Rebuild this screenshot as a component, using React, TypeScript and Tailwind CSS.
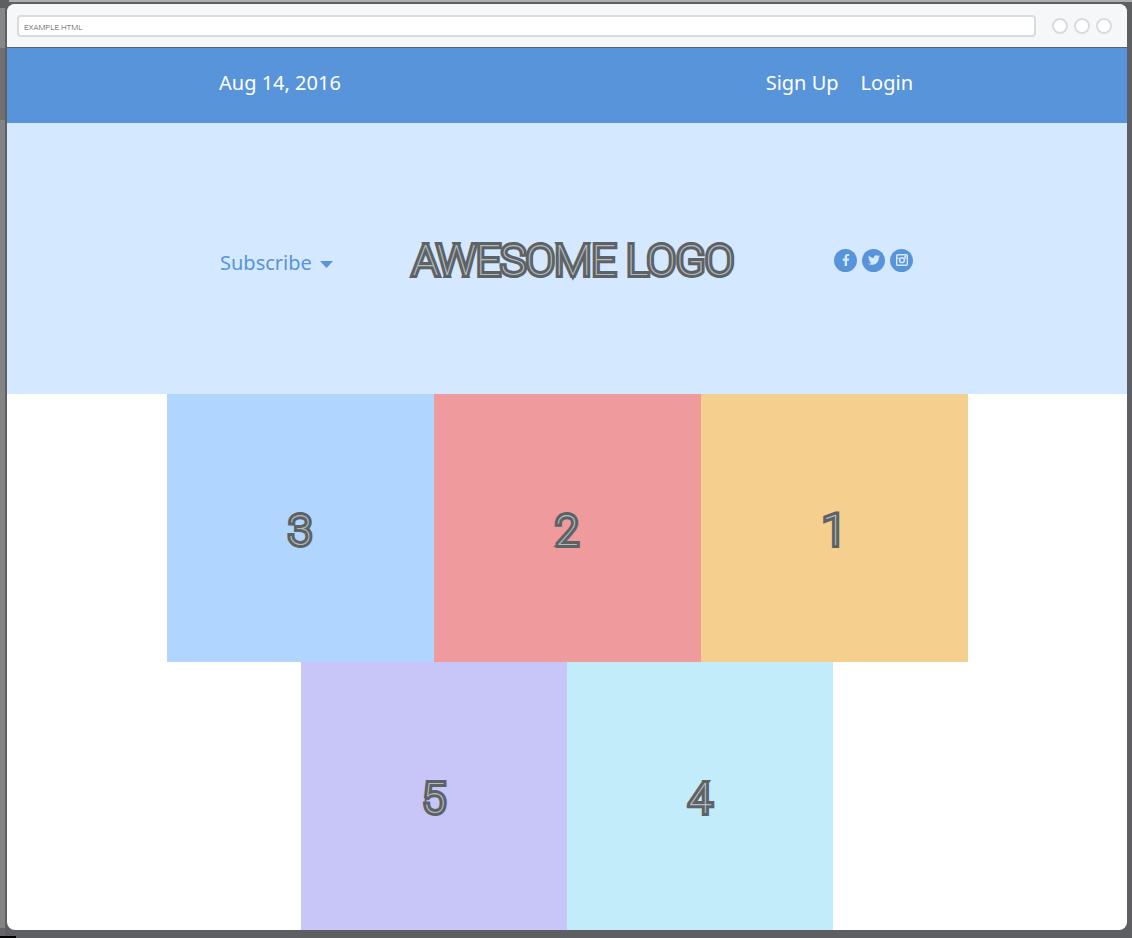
import { FaFacebookF, FaTwitter } from "react-icons/fa";

const outline =
  "font-['Roboto',sans-serif] font-thin text-[43px] leading-[54px] text-[#b4bbc0] [-webkit-text-stroke:6px_#5d6265] [paint-order:stroke_fill]";

const topTiles = [
  { label: "3", color: "bg-[#b0d6ff]" },
  { label: "2", color: "bg-[#ef9a9d]" },
  { label: "1", color: "bg-[#f4cf8d]" },
];

const bottomTiles = [
  { label: "5", color: "bg-[#c8c6f8]" },
  { label: "4", color: "bg-[#c3ecfa]" },
];

function Tile({ label, color }: { label: string; color: string }) {
  return (
    <div className={`flex h-[268px] flex-1 items-center justify-center pt-1 ${color}`}>
      <span className={outline}>{label}</span>
    </div>
  );
}

function InstagramGlyph() {
  return (
    <svg viewBox="0 0 12 12" className="size-3" aria-hidden="true">
      <rect x="0.7" y="0.7" width="10.6" height="10.6" rx="1" fill="none" stroke="currentColor" strokeWidth="1.4" />
      <path d="M1 4.2h2.4M8.6 4.2H11" stroke="currentColor" strokeWidth="1" />
      <circle cx="6" cy="6.2" r="2.4" fill="none" stroke="currentColor" strokeWidth="1.5" />
      <rect x="8.2" y="1.6" width="2" height="2" fill="currentColor" />
    </svg>
  );
}

const social = "flex size-[23px] items-center justify-center rounded-full bg-[#5894d9] text-[#d4e8ff]";

export default function App() {
  return (
    <div className="flex min-h-screen bg-[#5e5f63] font-['Noto_Sans',sans-serif]">
      <div className="flex w-[5px] shrink-0 flex-col" aria-hidden="true">
        <div className="h-2 bg-[#5e5f63]" />
        <div className="h-10 bg-[#868789]" />
        <div className="h-[72px] bg-[#717070]" />
        <div className="flex-1 bg-[#828385]" />
        <div className="h-2 bg-[#656668]" />
        <div className="h-0.5 w-4 bg-black" />
      </div>
      <div className="min-w-0 flex-1">
        <div className="ml-1 h-0.5 bg-[#adaeb0]" />
        <div className="mt-0.5 mr-[5px] mb-2 ml-0.5 overflow-hidden rounded-lg bg-white">
          <div className="flex h-11 items-center border-b border-[#5e6266] bg-[#f5f7f9] pr-[15px] pl-[10px]">
            <input
              type="text"
              aria-label="Address"
              defaultValue="EXAMPLE.HTML"
              className="h-[22px] min-w-0 flex-1 rounded-sm border-2 border-[#d9dcde] bg-white px-[5px] pt-1 font-['Roboto',sans-serif] text-[8px] font-light text-[#4f5356] outline-none"
            />
            <div className="ml-4 flex gap-[6px]" aria-hidden="true">
              <span className="size-4 rounded-full border-2 border-[#d9dcde] bg-white" />
              <span className="size-4 rounded-full border-2 border-[#d9dcde] bg-white" />
              <span className="size-4 rounded-full border-2 border-[#d9dcde] bg-white" />
            </div>
          </div>

          <div className="h-[75px] bg-[#5894d9]">
            <div className="mx-auto flex h-[70px] max-w-[696px] items-center justify-between pr-[2px] text-xl text-white">
              <time dateTime="2016-08-14">Aug 14, 2016</time>
              <nav className="flex gap-[22px]">
                <a href="#signup">Sign Up</a>
                <a href="#login">Login</a>
              </nav>
            </div>
          </div>

          <header className="bg-[#d4e8ff]">
            <div className="mx-auto flex h-[271px] max-w-[696px] items-center pr-[2px] pl-px">
              <button type="button" className="flex items-center gap-2 pt-2 text-xl text-[#5894d9]">
                Subscribe
                <svg viewBox="0 0 13 7" className="mt-1 h-[7px] w-[13px]" aria-hidden="true">
                  <path d="M0 0h13L6.5 7z" fill="currentColor" />
                </svg>
              </button>
              <h1 className={`ml-20 whitespace-nowrap pt-[3px] ${outline}`}>AWESOME LOGO</h1>
              <div className="ml-auto flex gap-[5px] pt-[3px]">
                <a href="#facebook" aria-label="Facebook" className={social}>
                  <FaFacebookF size={12} />
                </a>
                <a href="#twitter" aria-label="Twitter" className={social}>
                  <FaTwitter size={12} />
                </a>
                <a href="#instagram" aria-label="Instagram" className={social}>
                  <InstagramGlyph />
                </a>
              </div>
            </div>
          </header>

          <main>
            <div className="mx-auto flex max-w-[801px]">
              {topTiles.map((tile) => (
                <Tile key={tile.label} {...tile} />
              ))}
            </div>
            <div className="mx-auto flex max-w-[532px]">
              {bottomTiles.map((tile) => (
                <Tile key={tile.label} {...tile} />
              ))}
            </div>
          </main>
        </div>
      </div>
    </div>
  );
}
